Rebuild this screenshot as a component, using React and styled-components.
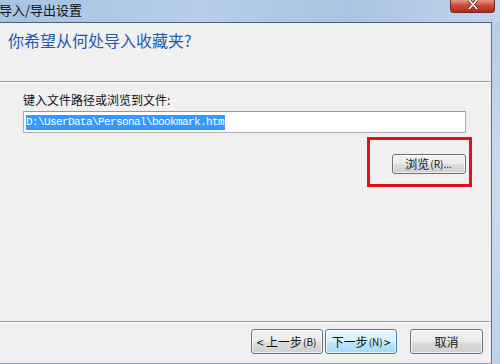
import React from 'react';
import styled, { createGlobalStyle } from 'styled-components';

const GlobalStyle = createGlobalStyle`
  html, body {
    margin: 0;
    padding: 0;
    background: #c4d7ed;
  }
  body {
    font-family: "Noto Sans CJK SC", "Liberation Sans", sans-serif;
  }
`;

const Window = styled.div`
  width: 500px;
  height: 364px;
  display: flex;
  flex-direction: column;
  overflow: hidden;
  background: linear-gradient(to bottom, #b3cbe6 0%, #c9dbef 50%, #bcd2ec 100%);
`;

const TitleBar = styled.div`
  height: 22px;
  flex: none;
  display: flex;
  justify-content: space-between;
  align-items: flex-start;
  background: linear-gradient(to right, #a6c2e3 0%, #b6cee9 40%, #a9c3e2 70%, #c2d6ee 100%);
`;

const TitleText = styled.div`
  margin-left: -1px;
  font-size: 13px;
  line-height: 20px;
  color: #111;
`;

const CloseButton = styled.div`
  width: 45px;
  height: 13px;
  margin-right: 5px;
  box-sizing: border-box;
  border: 1px solid #6b2a24;
  border-top: none;
  border-radius: 0 0 4px 4px;
  background: linear-gradient(to bottom, #e49a8e 0%, #cf4a3a 45%, #b9281b 100%);
  display: flex;
  justify-content: center;
  align-items: flex-start;
`;

const Body = styled.div`
  flex: 1;
  display: flex;
  min-height: 0;
`;

const Content = styled.div`
  width: 491px;
  flex: none;
  display: flex;
  flex-direction: column;
  background: #f0f0f0;
  border-top: 1px solid #4e5d72;
  border-right: 1px solid #5f6f84;
  border-bottom: 1px solid #8ba6c8;
`;

const Header = styled.div`
  height: 58px;
  flex: none;
  padding: 5px 0 0 8px;
  box-sizing: border-box;
`;

const Heading = styled.h1`
  margin: 0;
  font-size: 16px;
  line-height: 24px;
  font-weight: normal;
  color: #1d5bb0;
`;

const Separator = styled.div`
  height: 1px;
  flex: none;
  background: #a0a0a0;
  border-bottom: 1px solid #fbfbfb;
`;

const Main = styled.div`
  flex: 1;
  display: flex;
  flex-direction: column;
  padding: 9px 19px 0 23px;
`;

const Label = styled.div`
  font-size: 12px;
  line-height: 16px;
  color: #111;
  margin-bottom: 3px;
`;

const PathInput = styled.div`
  width: 443px;
  height: 22px;
  box-sizing: border-box;
  border: 1px solid #abadb3;
  border-top-color: #8c9aae;
  background: #fff;
  display: flex;
  align-items: center;
  padding-left: 2px;
`;

const Selected = styled.span`
  background: #3399ff;
  color: #fff;
  font-family: "Liberation Mono", monospace;
  font-size: 11px;
  letter-spacing: -0.6px;
  line-height: 15px;
  padding-right: 1px;
`;

const BrowseRow = styled.div`
  display: flex;
  justify-content: flex-end;
  margin-top: 4px;
`;

const Highlight = styled.div`
  width: 105px;
  height: 50px;
  box-sizing: border-box;
  border: 3px solid #e3101c;
  display: flex;
  justify-content: flex-end;
  align-items: flex-start;
  padding: 14px 3px 0 0;
`;

const Button = styled.button`
  width: ${(p) => p.$w || 73}px;
  height: ${(p) => p.$h || 24}px;
  box-sizing: border-box;
  padding: 0;
  border: 1px solid ${(p) => (p.$focus ? '#3c7fb1' : '#707070')};
  border-radius: 3px;
  background: ${(p) =>
    p.$focus
      ? 'linear-gradient(to bottom, #eaf6fd 0%, #d9f0fc 50%, #bee6fd 51%, #a7d9f5 100%)'
      : 'linear-gradient(to bottom, #f2f2f2 0%, #ebebeb 50%, #dddddd 51%, #cfcfcf 100%)'};
  box-shadow: inset 0 0 0 1px rgba(255, 255, 255, 0.7);
  font-family: "Noto Sans CJK SC", "Liberation Sans", sans-serif;
  font-size: 12px;
  line-height: 16px;
  color: #111;
  display: flex;
  align-items: center;
  justify-content: center;
  white-space: nowrap;
`;

const Small = styled.span`
  font-size: 10px;
  margin: 0 1px;
`;

const Footer = styled.div`
  height: 40px;
  flex: none;
  display: flex;
  justify-content: flex-end;
  align-items: flex-start;
  padding: 6px 8px 0 0;
  box-sizing: border-box;
`;

const Gap = styled.div`
  width: ${(p) => p.$w}px;
`;

const App = () => (
  <>
    <GlobalStyle />
    <Window>
      <TitleBar>
        <TitleText>导入/导出设置</TitleText>
        <CloseButton>
          <svg width="12" height="10" viewBox="0 0 12 10">
            <path d="M2 0 L10 9 M10 0 L2 9" stroke="#5a1a14" strokeWidth="3.2" />
            <path d="M2 0 L10 9 M10 0 L2 9" stroke="#fff" strokeWidth="1.8" />
          </svg>
        </CloseButton>
      </TitleBar>
      <Body>
        <Content>
          <Header>
            <Heading>你希望从何处导入收藏夹?</Heading>
          </Header>
          <Separator />
          <Main>
            <Label>键入文件路径或浏览到文件:</Label>
            <PathInput>
              <Selected>D:\UserData\Personal\bookmark.htm</Selected>
            </PathInput>
            <BrowseRow>
              <Highlight>
                <Button $w={74} $h={20}>
                  浏览<Small>(R)...</Small>
                </Button>
              </Highlight>
            </BrowseRow>
          </Main>
          <Separator />
          <Footer>
            <Button $w={72} $h={25}>
              &lt; 上一步<Small>(B)</Small>
            </Button>
            <Gap $w={2} />
            <Button $w={72} $h={25} $focus>
              下一步<Small>(N)</Small> &gt;
            </Button>
            <Gap $w={13} />
            <Button $w={73} $h={25}>
              取消
            </Button>
          </Footer>
        </Content>
      </Body>
    </Window>
  </>
);

export default App;
